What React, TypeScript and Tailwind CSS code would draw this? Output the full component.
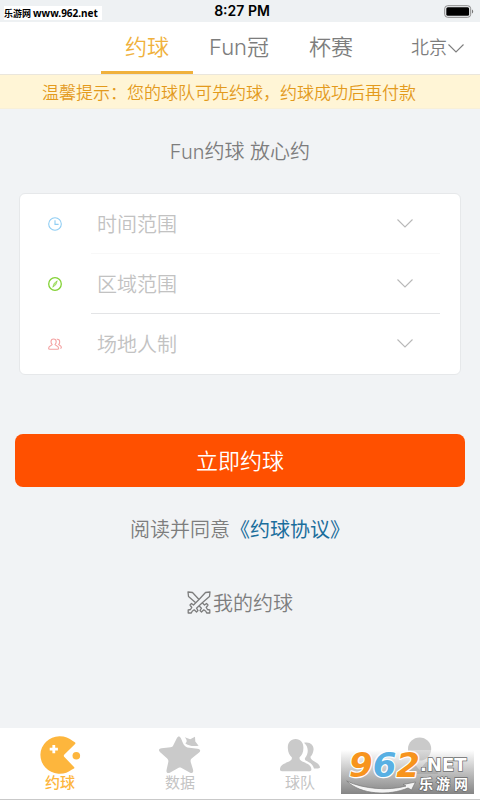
import React from 'react';

const tabs = ['约球', 'Fun冠', '杯赛'];

function ClockIcon() {
  return (
    <svg viewBox="0 0 14 14" className="w-3.5 h-3.5" fill="none" stroke="#8fcdf3" strokeWidth="1.1">
      <circle cx="7" cy="7" r="6.3" />
      <path d="M7 3.2V7.4H10.6" />
    </svg>
  );
}

function CompassIcon() {
  return (
    <svg viewBox="0 0 14 14" className="w-3.5 h-3.5" fill="none" stroke="#83d235" strokeWidth="1.3">
      <circle cx="7" cy="7" r="6.3" />
      <path d="M9.2 3.8L7.9 7.6L4.8 10.2L6.1 6.4Z" fill="#83d235" fillOpacity="0.5" strokeWidth="0.7" />
    </svg>
  );
}

function PlayersIcon() {
  return (
    <svg viewBox="0 0 14 14" className="w-3.5 h-3.5" fill="none" stroke="#f4a3a3" strokeWidth="1.1">
      <path d="M5.6 2C3.8 2 3 3.3 3 4.8C3 6.2 3.6 7 4.2 7.6C3.8 8.6 0.6 8.7 0.6 11.2C0.6 12 1 12.2 1.8 12.2H9.4C10.3 12.2 10.6 11.9 10.6 11.2C10.6 8.7 7.4 8.6 7 7.6C7.7 7 8.2 6.2 8.2 4.8C8.2 3.3 7.4 2 5.6 2Z" />
      <path d="M8.8 2.4C10.5 2 11.7 3 11.7 4.9C11.7 6.2 11.2 6.9 10.6 7.4C11 8.3 13.4 8.4 13.4 10.4C13.4 11 13 11.3 12.2 11.3" />
    </svg>
  );
}

function Chevron({ className }: { className?: string }) {
  return (
    <svg viewBox="0 0 16 9" className={className} fill="none" stroke="currentColor" strokeWidth="1.1">
      <path d="M0.5 0.5L8 8L15.5 0.5" />
    </svg>
  );
}

function SwordsIcon() {
  const sword =
    'M1 1L5.5 1.5L12 8.5L17.5 14L19.5 12.5L21 14L19.2 16.5L20.5 18.5L22.8 19V22H19.7L18.8 20.2L16.8 18.8L14.5 21L13 19.5L14.5 17.2L9 12L1.5 5.5Z';
  return (
    <svg viewBox="0 0 24 24" className="w-6 h-6" fill="#f1f3f5" stroke="#7d7d7d" strokeWidth="1.3" strokeLinejoin="round">
      <path d={sword} />
      <path d={sword} transform="translate(24 0) scale(-1 1)" />
    </svg>
  );
}

function PacmanIcon() {
  return (
    <svg viewBox="0 0 42 40" className="w-[42px] h-10" fill="#fdb63d">
      <path d="M35.6 10.4C37 9.2 37 8.6 33.8 7A19.4 18.8 0 1 0 33 35.6C35.8 34.4 35.8 33.8 35 33L25.4 23Q24.2 21.6 25.4 20.4Z" />
      <circle cx="37.3" cy="21.7" r="3.8" />
      <path d="M13.4 11H16.2V13.7H18.9V16.5H16.2V19.2H13.4V16.5H10.7V13.7H13.4Z" fill="#fff" />
    </svg>
  );
}

function StarIcon() {
  return (
    <svg viewBox="0 -1 42 40" className="w-[42px] h-10" fill="#cacaca">
      <path d="M17.8 3.2C19 0.9 20.7 0.9 21.9 3.2C24.2 8 24.6 12.3 30.4 12.7L38.5 13.8C41.6 14.3 42 15.9 39.8 17.8L32.6 23.6C31.6 24.5 31.4 25.5 31.7 27L34 34.6C34.7 37.6 33.4 38.7 30.7 37.4L22.6 32.9C21.4 32.3 20.4 32.3 19.2 32.9L11.3 37.5C8.6 38.9 7 37.8 7.6 34.8L9.3 27C9.6 25.5 9.2 24.5 8.2 23.5L1.2 17.2C-0.9 15.3-0.3 13.6 2.6 13.3L11.5 12.3C13 12.1 13.8 11.5 14.3 10.3Z" />
      <path d="M25.8 2.2L31.2 4.2L36 1.8L36.3 6.6L39.6 10.7C34 11.6 28.8 10.6 26.3 8.2C28.4 7 28 4.8 25.8 2.2Z" />
    </svg>
  );
}

function TeamIcon() {
  return (
    <svg viewBox="0 -2 42 40" className="w-[42px] h-10" fill="#cacaca">
      <path d="M25 6.8C31 5 35.2 9.4 34.5 14C34 17.4 33 19.4 31.6 20.6C30.6 24.8 39.6 25.6 41 31C41 32 40.2 32.4 39 32.4H35C34 28.6 31 26.4 26.6 24.4C25.6 23.8 25.6 22.6 26.4 21.6C30 16.4 29.4 10.6 25 6.8Z" />
      <path d="M16.6 3C11.4 3 8.6 6.8 8.8 12C9 16.4 10.4 19 12.8 21.2C14.2 27.6 1 25.4 1 33.6C1 34.8 1.8 35.2 3 35.2H30.4C31.6 35.2 32.4 34.8 32.4 33.6C32.4 25.4 19.2 27.6 20.6 21.2C23 19 24.4 16.4 24.4 12C24.6 6.8 21.8 3 16.6 3Z" />
    </svg>
  );
}

function ProfileIcon() {
  return (
    <svg viewBox="0 -2 42 40" className="w-[42px] h-10" fill="#cacaca">
      <circle cx="20.6" cy="13" r="11.6" />
      <path d="M3 38C4 29 10 26 14 26L20.4 34L27 26C32 26 38 29 39 38Z" />
    </svg>
  );
}

const filters = [
  { id: 'time', label: '时间范围', icon: ClockIcon, line: 'border-[#f8f8f8]' },
  { id: 'area', label: '区域范围', icon: CompassIcon, line: 'border-[#e3e4e6]' },
  { id: 'players', label: '场地人制', icon: PlayersIcon, line: 'border-transparent' },
];

const menu = [
  { id: 'match', label: '约球', icon: PacmanIcon, color: 'text-[#fdb63d] font-medium' },
  { id: 'data', label: '数据', icon: StarIcon, color: 'text-[#c4c4c4]' },
  { id: 'team', label: '球队', icon: TeamIcon, color: 'text-[#c4c4c4]' },
  { id: 'profile', label: '', icon: ProfileIcon, color: 'text-[#c4c4c4]' },
];

function SiteLogo() {
  return (
    <div className="absolute right-1.5 bottom-1.5 w-[133px] h-11 bg-linear-to-b from-white/30 to-[#858585]">
      <svg viewBox="0 0 133 44" className="w-full h-full overflow-visible">
        <path
          d="M5.7 31C20 45 48 46 67 38L70.5 40L74.5 32L62 34.5L65 36C48 41 22 39 5.7 31Z"
          fill="#f4f4f4"
          stroke="#777"
          strokeWidth="0.7"
        />
        <text
          x="8"
          y="27"
          fontFamily="DejaVu Sans"
          fontStyle="italic"
          fontWeight="700"
          fontSize="34"
          stroke="#fff"
          strokeWidth="2.4"
          strokeLinejoin="round"
          paintOrder="stroke"
        >
          <tspan fill="#f7941d">9</tspan>
          <tspan fill="#58b0e3">6</tspan>
          <tspan fill="#f7941d">2</tspan>
        </text>
        <g fontWeight="700" fill="#fff" stroke="#6b6b6b" strokeWidth="1.4" paintOrder="stroke">
          <text x="79" y="21" fontFamily="DejaVu Sans" fontSize="18">.NET</text>
          <g fontFamily="Noto Sans CJK SC" fontSize="14">
            <text x="78" y="39">乐</text>
            <text x="95" y="39">游</text>
            <text x="113" y="39">网</text>
          </g>
        </g>
      </svg>
    </div>
  );
}

export default function App() {
  return (
    <div className="relative min-h-screen flex flex-col bg-[#f1f3f5] text-[#7d7d7d] font-['Noto_Sans_CJK_SC',sans-serif]">
      {/* Status bar */}
      <div className="h-[22px] grid grid-cols-3 items-center bg-[#eef1f3] text-black">
        <div className="ml-1 mt-1 w-[98px] h-3.5 bg-white text-[9px] leading-[14px] font-bold whitespace-nowrap">
          乐游网 <span className="text-[10px] font-['Noto_Sans']">www.962.net</span>
        </div>
        <div className="pl-1 text-center text-[14px] leading-[22px] font-semibold font-['Inter']">8:27 PM</div>
        <svg viewBox="0 0 30 13" className="w-[30px] h-[13px] justify-self-end mr-1.5">
          <rect x="0.7" y="0.7" width="26" height="11.6" rx="3" fill="none" stroke="#8a8a8a" />
          <rect x="2.3" y="2.3" width="22.8" height="8.4" rx="1.5" fill="#000" />
          <path d="M28 4.5C29.6 5 29.6 8 28 8.5Z" fill="#777" />
        </svg>
      </div>

      {/* Top tabs */}
      <nav className="h-[53px] grid grid-cols-[101fr_92fr_92fr_92fr_103fr] bg-white border-b border-[#eae6dc] font-[family-name:Inter,'Noto_Sans_CJK_SC',sans-serif]">
        {tabs.map((tab, i) => (
          <button
            key={tab}
            className={
              i === 0
                ? 'col-start-2 border-b-3 border-[#f0b13c] text-[22px] leading-8 font-[350] text-[#f0b13c]'
                : 'border-b-3 border-transparent text-[22px] leading-8 font-[350]'
            }
          >
            {tab}
          </button>
        ))}
        <div className="relative flex items-center pl-[34px]">
          <select aria-label="城市" className="appearance-none w-[54px] text-[18px] leading-6 font-[350] outline-none">
            <option>北京</option>
          </select>
          <Chevron className="absolute left-[71px] w-4 h-[9px] pointer-events-none" />
        </div>
      </nav>

      <p className="h-[34px] pl-[42px] text-[17px] leading-[34px] font-[350] text-[#e39a1c] bg-[#fff5d6] border-b border-[#f8f0d8]">
        温馨提示：您的球队可先约球，约球成功后再付款
      </p>

      <main className="flex-1 flex flex-col">
        <h1 className="mt-[29px] text-center text-[20px] leading-7 font-[350] font-[family-name:Inter,'Noto_Sans_CJK_SC',sans-serif]">
          Fun约球 放心约
        </h1>

        {/* Filters */}
        <form className="mt-[27px] mx-[19px] rounded-md border border-[#e6e8ea] bg-white">
          {filters.map(({ id, label, icon: Icon, line }) => (
            <div key={id} className="flex items-center pl-7 pr-5">
              <label htmlFor={id} aria-label={label} className="w-[43px]">
                <Icon />
              </label>
              <div className={`relative flex-1 flex items-center h-[60px] border-b ${line}`}>
                <select
                  id={id}
                  className="appearance-none w-full pl-1.5 text-[20px] leading-8 font-[350] text-[#c2c2c2] outline-none"
                >
                  <option>{label}</option>
                </select>
                <Chevron className="absolute right-[27px] w-4 h-[9px] text-[#b8b8b8] pointer-events-none" />
              </div>
            </div>
          ))}
        </form>

        <button className="mt-[59px] mx-[15px] h-[53px] pb-1 rounded-lg bg-[#ff5000] text-[22px] leading-8 font-[350] text-white">
          立即约球
        </button>

        <p className="mt-7 text-center text-[20px] leading-7 font-[350]">
          阅读并同意
          <a href="#agreement" className="font-normal text-[#1b6e9c]">《约球协议》</a>
        </p>

        <a href="#mine" className="mt-[46px] flex items-center justify-center gap-0.5 text-[20px] leading-7 font-[350]">
          <SwordsIcon />
          我的约球
        </a>
      </main>

      {/* Bottom menu */}
      <nav className="h-[72px] pt-1.5 grid grid-cols-4 bg-white border-b border-[#c9c9c9]">
        {menu.map(({ id, label, icon: Icon, color }) => (
          <a key={id} href={`#${id}`} className={`flex flex-col items-center text-[15px] leading-4 ${color}`}>
            <Icon />
            {label}
          </a>
        ))}
      </nav>

      <SiteLogo />
    </div>
  );
}
